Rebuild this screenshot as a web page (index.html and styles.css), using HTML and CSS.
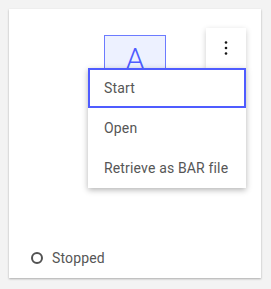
FILE: index.html
```html
<!DOCTYPE html>
<html lang="en">
<head>
    <meta charset="UTF-8">
    <title>Integration server</title>
    <link rel="stylesheet" href="styles.css">
</head>
<body>
    <div class="card">
        <div class="card-header">
            <div class="app-icon">A</div>
            <div class="overflow">
                <button class="kebab" aria-label="Options">
                    <svg width="4" height="16" viewBox="0 0 4 16">
                        <circle cx="2" cy="2.5" r="1.3" fill="#161616"/>
                        <circle cx="2" cy="8" r="1.3" fill="#161616"/>
                        <circle cx="2" cy="13.5" r="1.3" fill="#161616"/>
                    </svg>
                </button>
                <ul class="menu">
                    <li class="menu-item focused">Start</li>
                    <li class="menu-item">Open</li>
                    <li class="menu-item">Retrieve as BAR file</li>
                </ul>
            </div>
        </div>
        <div class="status">
            <span class="status-ring"></span>
            <span>Stopped</span>
        </div>
    </div>
</body>
</html>
```

FILE: styles.css
```css
body {
    margin: 0;
    padding: 9px;
    background-color: #f3f3f3;
    font-family: Roboto, "Liberation Sans", sans-serif;
    color: #393939;
}

.card {
    width: 252px;
    height: 269px;
    box-sizing: border-box;
    background-color: #fff;
    box-shadow: 0 1px 2px rgba(0, 0, 0, 0.3);
    display: flex;
    flex-direction: column;
    padding: 19px 15px 10px 22px;
}

.card-header {
    display: grid;
    grid-template-columns: 1fr auto 1fr;
    align-items: start;
    margin-left: -7px;
}

.app-icon {
    grid-column: 2;
    margin-top: 7px;
    width: 60px;
    height: 60px;
    border: 1px solid #6c7bff;
    background-color: #edf1ff;
    color: #4e5cff;
    font-size: 30px;
    font-weight: 300;
    line-height: 46px;
    text-align: center;
}

.overflow {
    grid-column: 3;
    justify-self: end;
    position: relative;
}

.kebab {
    width: 40px;
    height: 40px;
    border: 0;
    padding: 0;
    background-color: #fff;
    box-shadow: 0 2px 6px rgba(0, 0, 0, 0.2);
    display: flex;
    align-items: center;
    justify-content: center;
}

.menu {
    position: absolute;
    top: 40px;
    right: 0;
    width: 158px;
    margin: 0;
    padding: 0;
    list-style: none;
    background-color: #fff;
    box-shadow: 0 2px 6px rgba(0, 0, 0, 0.3);
}

.menu-item {
    height: 40px;
    box-sizing: border-box;
    padding: 0 16px;
    display: flex;
    align-items: center;
    font-size: 14px;
    letter-spacing: 0.16px;
    color: #565656;
    white-space: nowrap;
}

.menu-item.focused {
    border: 2px solid #4f5cff;
    padding: 0 14px;
}

.status {
    margin-top: auto;
    display: flex;
    align-items: center;
    gap: 9px;
    font-size: 14px;
    letter-spacing: 0.16px;
    color: #565656;
    height: 20px;
}

.status-ring {
    width: 8px;
    height: 8px;
    border: 2px solid #525252;
    border-radius: 50%;
}
```
